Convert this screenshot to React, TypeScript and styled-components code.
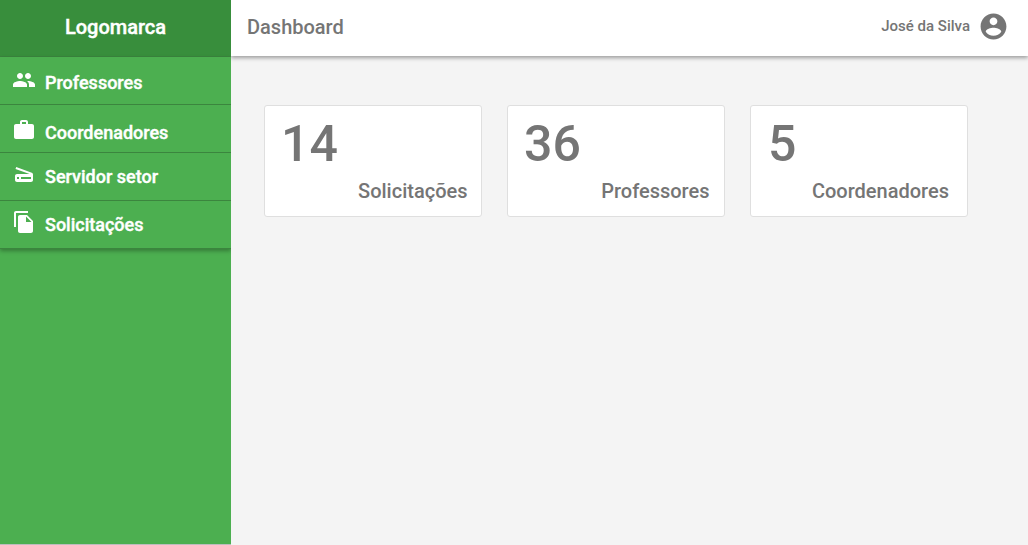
import React from "react";
import styled, { createGlobalStyle } from "styled-components";

const GlobalStyle = createGlobalStyle`
  * { box-sizing: border-box; }
  body { margin: 0; background: #f4f4f4; font-family: Roboto, sans-serif; color: #757575; }
`;

const Shell = styled.div`
  display: flex;
  height: 545px;
  overflow: hidden;
`;

const Sidebar = styled.aside`
  position: relative;
  z-index: 1;
  width: 231px;
  flex: none;
  background: #4caf50;
  border-bottom: 1px solid #bdbdbd;
  color: #fff;
  overflow: hidden;
`;

const Brand = styled.div`
  height: 57px;
  padding-top: 15px;
  background: #388e3c;
  border-bottom: 1px solid #3b853e;
  text-align: center;
  font-size: 20px;
  line-height: 24px;
  font-weight: 500;
  -webkit-text-stroke: 0.4px #fff;
`;

const Menu = styled.nav`
  box-shadow: 0 2px 4px rgba(0, 0, 0, 0.3);
`;

const MenuItem = styled.a`
  display: flex;
  align-items: flex-start;
  height: 48px;
  padding-left: 12px;
  border-bottom: 1px solid #3b853e;
`;

const MenuIcon = styled.svg<{ $top: number }>`
  width: 24px;
  height: 24px;
  flex: none;
  margin-top: ${(p) => p.$top}px;
  fill: currentColor;
`;

const MenuLabel = styled.span<{ $top: number }>`
  margin: ${(p) => p.$top}px 0 0 9px;
  font-size: 18px;
  line-height: 22px;
  font-weight: 500;
  -webkit-text-stroke: 0.4px #fff;
`;

const Main = styled.div`
  flex: 1;
`;

const TopBar = styled.header`
  display: flex;
  justify-content: space-between;
  height: 56px;
  padding: 0 19px 0 16px;
  background: #fff;
  box-shadow: 0 2px 4px rgba(0, 0, 0, 0.36);
`;

const Title = styled.h1`
  margin: 15px 0 0;
  font-size: 20px;
  line-height: 24px;
  font-weight: 500;
`;

const User = styled.div`
  display: flex;
  gap: 8px;
  font-size: 15px;
  line-height: 18px;
  font-weight: 500;
`;

const UserName = styled.span`
  margin-top: 17px;
`;

const Avatar = styled.svg`
  width: 31px;
  height: 31px;
  margin-top: 11px;
  fill: currentColor;
`;

const Cards = styled.main`
  display: flex;
  gap: 25px;
  padding: 49px 0 0 33px;
`;

const Card = styled.section`
  display: flex;
  flex-direction: column;
  width: 218px;
  height: 112px;
  padding-top: 8px;
  background: #fff;
  border: 1px solid #dfdfdf;
  border-radius: 3px;
`;

const Count = styled.strong<{ $inset: number }>`
  padding-left: ${(p) => p.$inset}px;
  font-size: 50px;
  line-height: 60px;
  font-weight: 500;
`;

const Caption = styled.span<{ $inset: number }>`
  margin: 5px ${(p) => p.$inset}px 0 0;
  text-align: right;
  font-size: 20px;
  line-height: 24px;
  font-weight: 500;
`;

const menu = [
  {
    label: "Professores", iconTop: 11, labelTop: 15,
    path: "M16 11c1.66 0 2.99-1.34 2.99-3S17.66 5 16 5c-1.66 0-3 1.34-3 3s1.34 3 3 3zm-8 0c1.66 0 2.99-1.34 2.99-3S9.66 5 8 5C6.34 5 5 6.34 5 8s1.34 3 3 3zm0 2c-2.33 0-7 1.17-7 3.5V19h14v-2.5c0-2.33-4.67-3.5-7-3.5zm8 0c-.29 0-.62.02-.97.05 1.16.84 1.97 1.97 1.97 3.45V19h6v-2.5c0-2.33-4.67-3.5-7-3.5z",
  },
  {
    label: "Coordenadores", iconTop: 13, labelTop: 17,
    path: "M20 6h-4V4c0-1.11-.89-2-2-2h-4c-1.11 0-2 .89-2 2v2H4c-1.11 0-1.99.89-1.99 2L2 19c0 1.11.89 2 2 2h16c1.11 0 2-.89 2-2V8c0-1.11-.89-2-2-2zm-6 0h-4V4h4v2z",
  },
  {
    label: "Servidor setor", iconTop: 9, labelTop: 13,
    path: "M19.8 10.7L4.2 5l-.7 1.9L17.6 12H5c-1.1 0-2 .9-2 2v4c0 1.1.9 2 2 2h14c1.1 0 2-.9 2-2v-5.5c0-.8-.5-1.6-1.2-1.8zM7 17H5v-2h2v2zm12 0H9v-2h10v2z",
  },
  {
    label: "Solicitações", iconTop: 9, labelTop: 13,
    path: "M16 1H4c-1.1 0-2 .9-2 2v14h2V3h12V1zm-1 4l6 6v10c0 1.1-.9 2-2 2H7.99C6.89 23 6 22.1 6 21l.01-14c0-1.1.89-2 1.99-2h7zm-1 7h5.5L14 6.5V12z",
  },
];

const stats = [
  { count: 14, label: "Solicitações", countInset: 16, labelInset: 13.5 },
  { count: 36, label: "Professores", countInset: 16, labelInset: 14.5 },
  { count: 5, label: "Coordenadores", countInset: 17, labelInset: 18 },
];

export default function App() {
  return (
    <Shell>
      <GlobalStyle />
      <Sidebar>
        <Brand>Logomarca</Brand>
        <Menu>
          {menu.map((m) => (
            <MenuItem key={m.label}>
              <MenuIcon $top={m.iconTop} viewBox="0 0 24 24"><path d={m.path} /></MenuIcon>
              <MenuLabel $top={m.labelTop}>{m.label}</MenuLabel>
            </MenuItem>
          ))}
        </Menu>
      </Sidebar>
      <Main>
        <TopBar>
          <Title>Dashboard</Title>
          <User>
            <UserName>José da Silva</UserName>
            <Avatar viewBox="0 0 24 24">
              <path d="M12 2C6.48 2 2 6.48 2 12s4.48 10 10 10 10-4.48 10-10S17.52 2 12 2zm0 3c1.66 0 3 1.34 3 3s-1.34 3-3 3-3-1.34-3-3 1.34-3 3-3zm0 14.2c-2.5 0-4.71-1.28-6-3.22.03-1.99 4-3.08 6-3.08 1.99 0 5.97 1.09 6 3.08-1.29 1.94-3.5 3.22-6 3.22z" />
            </Avatar>
          </User>
        </TopBar>
        <Cards>
          {stats.map((s) => (
            <Card key={s.label}>
              <Count $inset={s.countInset}>{s.count}</Count>
              <Caption $inset={s.labelInset}>{s.label}</Caption>
            </Card>
          ))}
        </Cards>
      </Main>
    </Shell>
  );
}
